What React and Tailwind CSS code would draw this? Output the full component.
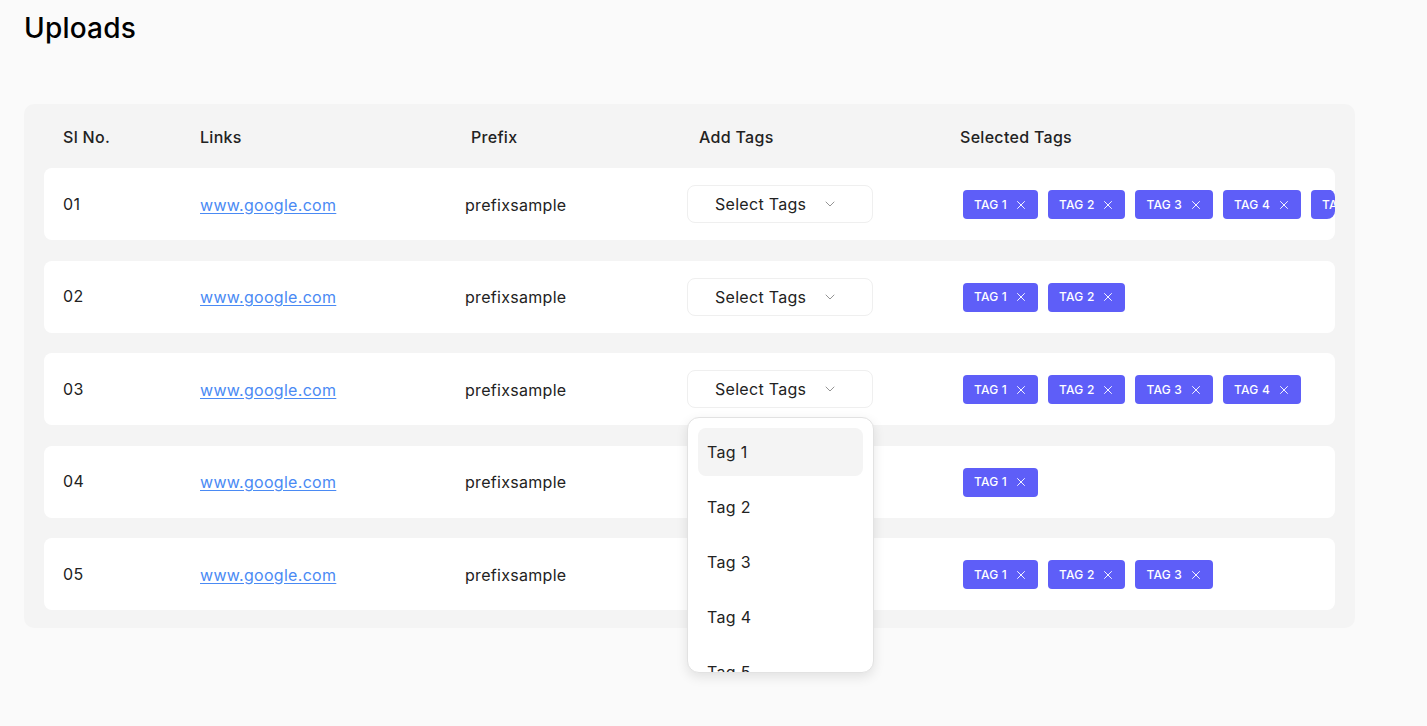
import React from 'react';
import { ChevronDown, X } from 'lucide-react';

const rows = [
  { id: '01', tags: [1, 2, 3, 4, 5] },
  { id: '02', tags: [1, 2] },
  { id: '03', tags: [1, 2, 3, 4], open: true },
  { id: '04', tags: [1] },
  { id: '05', tags: [1, 2, 3] },
];

const cols = 'grid grid-cols-[137px_265px_222px_273px_1fr] items-center';

const Tag = ({ n }) => (
  <span className="flex items-center gap-[7px] shrink-0 h-[29px] pl-[11px] pr-[10px] rounded-[4px] bg-[#5e5ef8] text-white text-[12px] font-medium tracking-[0.2px]">
    TAG {n}
    <X className="h-[14px] w-[14px]" strokeWidth={1.6} />
  </span>
);

const TagMenu = () => (
  <div className="absolute left-0 top-[47px] z-10 w-[187px] h-[256px] overflow-hidden rounded-xl border border-[#e2e2e2] bg-white shadow-[0_4px_12px_rgba(0,0,0,0.1)] p-[10px]">
    <ul className="flex flex-col gap-[7px]">
      {[1, 2, 3, 4, 5].map((n) => (
        <li
          key={n}
          className={`h-[48px] flex items-center px-[9px] rounded-lg text-[16px] tracking-[0.3px] text-[#222] ${
            n === 1 ? 'bg-[#f4f4f4]' : ''
          }`}
        >
          Tag {n}
        </li>
      ))}
    </ul>
  </div>
);

export default function App() {
  return (
    <div className="min-h-screen bg-[#fafafa] px-6 font-['Inter',sans-serif] text-[#1f1f1f]">
      <h1 className="pt-[10px] text-[28px] font-medium leading-[36px] tracking-[0.2px] text-black">Uploads</h1>

      <div className="mt-[58px] w-[1331px] rounded-[10px] bg-[#f4f4f4] px-5 pb-[18px]">
        <div className={`${cols} h-[64px] pt-[2px] pl-[19px] text-[16px] font-medium tracking-[0.3px] text-[#222]`}>
          <span>Sl No.</span>
          <span>Links</span>
          <span className="pl-[6px]">Prefix</span>
          <span className="pl-[12px]">Add Tags</span>
          <span>Selected Tags</span>
        </div>

        <div className="flex flex-col gap-[20.5px]">
          {rows.map((r) => (
            <div
              key={r.id}
              className={`${cols} relative h-[72px] rounded-lg bg-white pl-[19px] text-[16px] tracking-[0.3px] text-[#222]`}
            >
              <span className="-mt-[1px]">{r.id}</span>
              <a href="#" className="pt-[1px] text-[#4a8af4] underline underline-offset-2 w-fit">
                www.google.com
              </a>
              <span className="pt-[1px]">prefixsample</span>
              <div className="relative">
                <button className="flex h-[38px] w-[186px] items-center gap-[16px] rounded-lg border border-[#efefef] bg-white pl-[27px] text-[16px] tracking-[0.3px] text-[#222]">
                  Select Tags
                  <ChevronDown className="h-[16px] w-[16px] text-[#8c8c8c]" strokeWidth={1.4} />
                </button>
                {r.open && <TagMenu />}
              </div>
              <div className="flex gap-[10px] overflow-hidden pl-[3px] pt-[1px] rounded-r-lg">
                {r.tags.map((n) => (
                  <Tag key={n} n={n} />
                ))}
              </div>
            </div>
          ))}
        </div>
      </div>
    </div>
  );
}
